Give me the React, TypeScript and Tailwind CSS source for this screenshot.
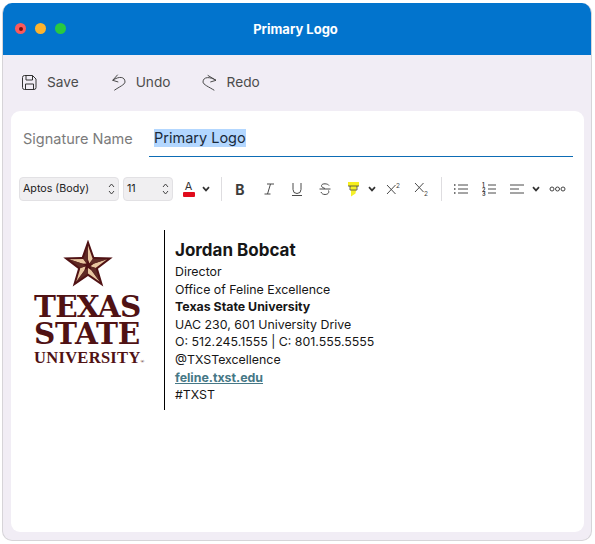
import React from "react";

const sf = "font-['Inter','Liberation_Sans',sans-serif]";

function Chevron() {
  return (
    <svg width="8" height="6" viewBox="0 0 8 6" fill="none" stroke="#333" strokeWidth="1.7" className="block">
      <path d="M1 1.200 4 4.400 7 1.200" />
    </svg>
  );
}

function Stepper() {
  return (
    <svg width="7" height="14" viewBox="0 0 7 14" fill="none" stroke="#444" strokeWidth="1">
      <path d="M1 5 3.500 2 6 5M1 9l2.500 3L6 9" />
    </svg>
  );
}

function Star() {
  const p = (a: number, r: number) => {
    const t = ((a - 90) * Math.PI) / 180;
    return `${(25 + r * Math.cos(t)).toFixed(2)},${(25.5 + r * Math.sin(t)).toFixed(2)}`;
  };
  const outer = [0, 72, 144, 216, 288];
  const inner = [36, 108, 180, 252, 324];
  const all = outer.flatMap((a, i) => [p(a, 26), p(inner[i], 10.500)]).join(" ");
  return (
    <svg width="50" height="48" viewBox="0 0 50 48" className="block">
      <polygon points={all} fill="#501214" />
      {outer.map((a, i) => (
        <polygon key={a} points={`25,25.5 ${p(a, 20)} ${p(inner[i], 8)}`} fill="#e8c6a0" />
      ))}
      {outer.map((a, i) => (
        <polygon key={`d${a}`} points={`25,25.5 ${p(a, 20)} ${p(inner[(i + 4) % 5], 8)}`} fill="#5f2a25" />
      ))}
      <polygon
        points={[0, 36, 72, 108, 144, 180, 216, 252, 288, 324]
          .map((a, i) => p(a, i % 2 ? 2.600 : 6))
          .join(" ")}
        fill="#501214"
      />
    </svg>
  );
}

function Ico({ children, w = 16, h = 16, c = "#4a4a4a" }: { children: React.ReactNode; w?: number; h?: number; c?: string }) {
  return (
    <svg width={w} height={h} viewBox={`0 0 ${w} ${h}`} fill="none" stroke={c} strokeWidth="1" className="block shrink-0">
      {children}
    </svg>
  );
}

export default function App() {
  return (
    <div className={`w-[595px] h-[544px] bg-white pt-[3px] pr-[3px] pb-[3px] pl-[2px] ${sf}`}>
      <div className="h-full flex flex-col rounded-[10px] overflow-hidden bg-[#f1edf5] border border-[#d6d4d8] border-t-0">
        {/* title bar */}
        <div className="relative h-[52px] shrink-0 -mx-px bg-[#0274cd] flex items-center justify-center pt-[2px]">
          <div className="absolute left-[13px] top-[20px] flex gap-[9px]">
            <div className="w-[11px] h-[11px] rounded-full bg-[#fb5a5c] flex items-center justify-center">
              <div className="w-[4px] h-[4px] rounded-full bg-[#7a0d0c]" />
            </div>
            <div className="w-[11px] h-[11px] rounded-full bg-[#fdb32d]" />
            <div className="w-[11px] h-[11px] rounded-full bg-[#29c940]" />
          </div>
          <span className="text-white text-[13px] font-bold pr-[3px]">Primary Logo</span>
        </div>

        {/* action bar */}
        <div className="h-[56px] shrink-0 flex items-center pl-[19px] pb-[1px] text-[13.700px] text-[#4c4c4c]">
          <Ico w={15} h={15} c="#333">
            <path d="M2.500.5h8L14 4v8.500a2 2 0 0 1-2 2H2.500a2 2 0 0 1-2-2v-10a2 2 0 0 1 2-2Z" />
            <path d="M4 .5v4.500h6.500V.5M3.500 14.500V9h8v5.500" />
          </Ico>
          <span className="ml-[10px]">Save</span>
          <span className="ml-[32px]">
            <Ico w={18} h={20}>
              <path d="M6.700 1.700 1.700 7.300 7.300 9" />
              <path d="M1.700 7.300C8 3 14 3.500 14 9c0 2.500-6 5-10.700 8.300" />
            </Ico>
          </span>
          <span className="ml-[7px]">Undo</span>
          <span className="ml-[30px]">
            <Ico w={18} h={20}>
              <path d="M6.700 2.300 15 7.300 9.300 9" />
              <path d="M15 7.300C9 3.500 2 3.500 2 9c0 2.500 6 5 11.300 8.300" />
            </Ico>
          </span>
          <span className="ml-[8px]">Redo</span>
        </div>

        {/* card */}
        <div className="flex-1 ml-[8px] mr-[7px] mb-[8px] rounded-[9px] bg-white flex flex-col">
          {/* signature name */}
          <div className="flex h-[46px] pl-[12px] pr-[11px] shrink-0">
            <div className="w-[126px] pt-[17px] text-[14.500px] leading-[21px] text-[#7b7b7b] whitespace-nowrap">Signature Name</div>
            <div className="flex-1 border-b border-[#0d6cb5] pl-[5px] pt-[18px]">
              <span className="block w-fit bg-[#b3d7ff] text-[14.500px] leading-[18px] text-[#1a2a3a]">Primary Logo</span>
            </div>
          </div>

          {/* format bar */}
          <div className="flex items-center h-[24px] mt-[20px] pl-[8px] shrink-0 text-[10.700px] text-[#222]">
            <div className="w-[100px] h-[24px] rounded-[4px] bg-[#f0eff1] border border-[#e2e1e4] flex items-center justify-between pl-[3px] pr-[3px]">
              <span className="pt-[1px]">Aptos (Body)</span>
              <Stepper />
            </div>
            <div className="ml-[4px] w-[50px] h-[24px] rounded-[4px] bg-[#f0eff1] border border-[#e2e1e4] flex items-center justify-between pl-[3px] pr-[3px]">
              <span className="pt-[1px]">11</span>
              <Stepper />
            </div>
            <div className="ml-[9px] w-[13px] flex flex-col items-center">
              <span className="text-[11px] leading-[10px] text-[#333]">A</span>
              <div className="w-[12px] h-[5px] mt-[1px] bg-[#e00b1c] rounded-[1px]" />
            </div>
            <span className="ml-[7px]"><Chevron /></span>
            <div className="ml-[11px] w-px h-[24px] bg-[#dedde0]" />
            <span className="ml-[13px] w-[10px] text-center text-[14px] font-bold text-[#3c3c3c]">B</span>
            <span className="ml-[18px] w-[12px] flex justify-center">
              <Ico w={12} h={14}>
                <path d="M4 2h7M7.500 2 4.500 12M1.500 12h6" />
              </Ico>
            </span>
            <span className="ml-[16px]">
              <Ico w={12} h={14}>
                <path d="M2 1v6.500a4 4 0 0 0 8 0V1M1 13.500h10" />
              </Ico>
            </span>
            <span className="ml-[16px]">
              <Ico w={12} h={14}>
                <path d="M10 3.500C9 1.500 3 1 2.500 3.500 2.200 5.500 5 6 6 6.500M0.500 7h11M9.500 8.500c1 2.500-1 4-3.500 4-2 0-3.500-1-4-2.500" />
              </Ico>
            </span>
            <span className="ml-[16px]">
              <svg width="13" height="15" viewBox="0 0 13 15" className="block shrink-0">
                <rect x="1" y="0" width="11" height="4" fill="#f7ef1e" />
                <path d="M2.500 4h8L9 8.500l-.5 3-4.500 3V8.500Z" fill="#f5f02a" />
                <path d="M1 4h11M3 4v4h7V4" stroke="#444" strokeWidth="0.800" fill="none" />
              </svg>
            </span>
            <span className="ml-[8px]"><Chevron /></span>
            <span className="ml-[10px]">
              <Ico w={15} h={14}>
                <path d="M1 3l8.500 9M9.500 3l-8.500 9" />
                <text x="10" y="6" fontSize="6.500" fill="#444" stroke="none">2</text>
              </Ico>
            </span>
            <span className="ml-[13px]">
              <Ico w={15} h={15}>
                <path d="M1 1l8.500 9M9.500 1l-8.500 9" />
                <text x="10" y="14" fontSize="6.500" fill="#444" stroke="none">2</text>
              </Ico>
            </span>
            <div className="ml-[12px] w-px h-[24px] bg-[#dedde0]" />
            <span className="ml-[11px]">
              <Ico w={15} h={12}>
                <path d="M5 2h10M5 6h10M5 10h10" />
                <path d="M1 2h1.500M1 6h1.500M1 10h1.500" strokeWidth="1.500" />
              </Ico>
            </span>
            <span className="ml-[14px]">
              <Ico w={14} h={14}>
                <text x="0" y="5" fontSize="5.500" fill="#444" stroke="none" fontWeight="700">1</text>
                <text x="0" y="9.500" fontSize="5.500" fill="#444" stroke="none" fontWeight="700">2</text>
                <text x="0" y="14" fontSize="5.500" fill="#444" stroke="none" fontWeight="700">3</text>
                <path d="M6 3h8M6 7h8M6 11h8" />
              </Ico>
            </span>
            <span className="ml-[14px]">
              <Ico w={15} h={12}>
                <path d="M0 2h14M0 6h9M0 10h14" />
              </Ico>
            </span>
            <span className="ml-[7px]"><Chevron /></span>
            <span className="ml-[9px]">
              <svg width="17" height="6" viewBox="0 0 17 6" fill="none" stroke="#444" strokeWidth="1" className="block shrink-0">
                <circle cx="3" cy="3" r="2" />
                <circle cx="8.500" cy="3" r="2" />
                <circle cx="14" cy="3" r="2" />
              </svg>
            </span>
          </div>

          {/* signature */}
          <div className="flex mt-[29px] shrink-0">
            <div className="w-[153px] flex flex-col items-start pl-[23px] pt-[10px]">
              <div className="ml-[29px]"><Star /></div>
              <div className="mt-[5px] text-[#501214] font-['DejaVu_Serif',serif] font-bold text-[29.500px] leading-[27px] tracking-[-0.800px] whitespace-nowrap">TEXAS</div>
              <div className="text-[#501214] font-['DejaVu_Serif',serif] font-bold text-[29.500px] leading-[27px] tracking-[-0.300px] whitespace-nowrap">STATE</div>
              <div className="mt-[3px] text-[#501214] font-['Liberation_Serif',serif] font-bold text-[16.500px] leading-[15px] tracking-[0.300px] whitespace-nowrap">UNIVERSITY<span className="text-[5px]">®</span></div>
            </div>
            <div className="w-px h-[180px] bg-black shrink-0" />
            <div className="pl-[10px] pt-[10px] text-[12.370px] leading-[17.600px] text-[#161616] font-['Inter',sans-serif] whitespace-nowrap">
              <div className="text-[17px] leading-[20px] font-bold mb-[3px]">Jordan Bobcat</div>
              <div>Director</div>
              <div>Office of Feline Excellence</div>
              <div className="font-bold">Texas State University</div>
              <div>UAC 230, 601 University Drive</div>
              <div>O: 512.245.1555 | C: 801.555.5555</div>
              <div>@TXSTexcellence</div>
              <div className="font-bold text-[#467886] underline">feline.txst.edu</div>
              <div>#TXST</div>
            </div>
          </div>
        </div>
      </div>
    </div>
  );
}
